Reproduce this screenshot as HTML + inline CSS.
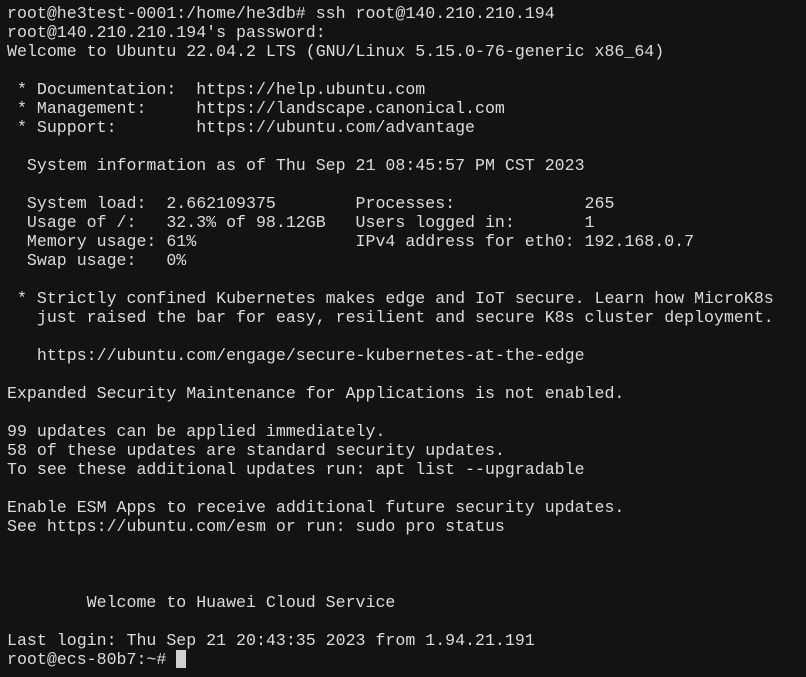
<!DOCTYPE html>
<html><head><style>
html,body{margin:0;padding:0;background:#131313;width:806px;height:677px;overflow:hidden}
pre{margin:0;position:absolute;left:7px;top:4px;font-family:"Liberation Mono","DejaVu Sans Mono",monospace;font-size:16.6px;line-height:19px;color:#dcdcdc;white-space:pre}
.c{display:inline-block;width:10px;height:18px;background:#d0d0d0;vertical-align:-4px}
</style></head><body><pre>root@he3test-0001:/home/he3db# ssh root@140.210.210.194
root@140.210.210.194's password:
Welcome to Ubuntu 22.04.2 LTS (GNU/Linux 5.15.0-76-generic x86_64)

 * Documentation:  https://help.ubuntu.com
 * Management:     https://landscape.canonical.com
 * Support:        https://ubuntu.com/advantage

  System information as of Thu Sep 21 08:45:57 PM CST 2023

  System load:  2.662109375        Processes:             265
  Usage of /:   32.3% of 98.12GB   Users logged in:       1
  Memory usage: 61%                IPv4 address for eth0: 192.168.0.7
  Swap usage:   0%

 * Strictly confined Kubernetes makes edge and IoT secure. Learn how MicroK8s
   just raised the bar for easy, resilient and secure K8s cluster deployment.

   https://ubuntu.com/engage/secure-kubernetes-at-the-edge

Expanded Security Maintenance for Applications is not enabled.

99 updates can be applied immediately.
58 of these updates are standard security updates.
To see these additional updates run: apt list --upgradable

Enable ESM Apps to receive additional future security updates.
See https://ubuntu.com/esm or run: sudo pro status



        Welcome to Huawei Cloud Service

Last login: Thu Sep 21 20:43:35 2023 from 1.94.21.191
root@ecs-80b7:~# <span class="c"></span></pre></body></html>
